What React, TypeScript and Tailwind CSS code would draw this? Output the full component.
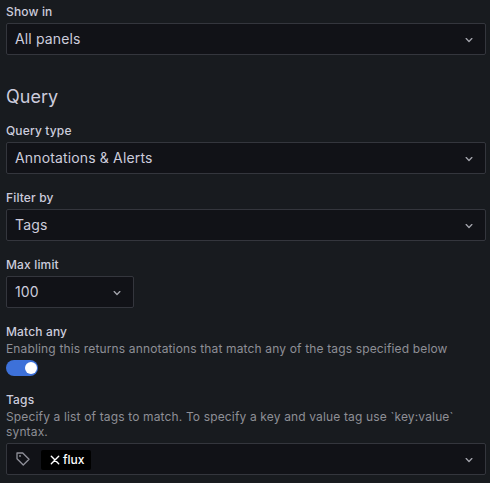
import type { ReactNode } from "react";

function Chevron() {
  return (
    <svg viewBox="0 0 24 24" className="mt-0.5 size-4 shrink-0" fill="#a3a4ac">
      <path d="M17 9.17a1 1 0 0 0-1.41 0L12 12.71 8.46 9.17a1 1 0 0 0-1.41 0 1 1 0 0 0 0 1.42l4.24 4.24a1 1 0 0 0 1.42 0L17 10.59a1 1 0 0 0 0-1.42Z" />
    </svg>
  );
}

function Select({ value, className = "w-[480px]" }: { value: string; className?: string }) {
  return (
    <div className={`flex h-8 items-center justify-between rounded-[2px] border border-[#34363d] bg-[#111217] px-2 text-[14px] tracking-[0.15px] ${className}`}>
      <span className="leading-5">{value}</span>
      <Chevron />
    </div>
  );
}

function Label({ children }: { children: string }) {
  return <div className="text-[12px] font-medium leading-[15px] tracking-[0.15px]">{children}</div>;
}

function Hint({ children }: { children: ReactNode }) {
  return <div className="mt-0.5 text-[12px] leading-[15px] tracking-[0.15px] text-[#8e8f96]">{children}</div>;
}

export default function App() {
  return (
    <div className="h-[483px] w-[490px] overflow-hidden bg-[#181b1f] pl-1.5 pt-1 font-['Inter',sans-serif] text-[#ccccdc]">
      <Label>Show in</Label>
      <div className="mt-1"><Select value="All panels" /></div>
      <h3 className="mt-[31px] text-[18px] leading-[22px]">Query</h3>
      <div className="mt-[15px]"><Label>Query type</Label></div>
      <div className="mt-1"><Select value="Annotations & Alerts" /></div>
      <div className="mt-4"><Label>Filter by</Label></div>
      <div className="mt-1"><Select value="Tags" /></div>
      <div className="mt-4"><Label>Max limit</Label></div>
      <div className="mt-1"><Select value="100" className="w-32" /></div>
      <div className="mt-4"><Label>Match any</Label></div>
      <Hint>Enabling this returns annotations that match any of the tags specified below</Hint>
      <div className="mt-1 flex h-4 w-8 items-center justify-end rounded-full bg-[#3d71d9] pr-[1px]">
        <div className="size-3 rounded-full bg-white" />
      </div>
      <div className="mt-4"><Label>Tags</Label></div>
      <Hint>Specify a list of tags to match. To specify a key and value tag use `key:value`<br />syntax.</Hint>
      <div className="mt-1 flex h-8 w-[480px] items-center rounded-[2px] border border-[#34363d] bg-[#111217] px-2">
        <svg viewBox="0 0 24 24" className="size-4" fill="none" stroke="#8e8f98" strokeWidth="2" strokeLinecap="round" strokeLinejoin="round">
          <path d="M3 3h8.6l9.4 9.4-8.6 8.6L3 11.6Z" /><circle cx="7.5" cy="7.5" r=".5" />
        </svg>
        <div className="ml-[10px] mt-0.5 flex h-5 w-[50px] items-center rounded-[2px] bg-black pl-2 text-[12px] font-medium text-white">
          <svg viewBox="0 0 12 12" className="mr-0.5 size-3" fill="none" stroke="white" strokeWidth="1.4" strokeLinecap="round"><path d="m2.3 2.3 7.4 7.4m0-7.4-7.4 7.4" /></svg>
          flux
        </div>
        <div className="ml-auto"><Chevron /></div>
      </div>
    </div>
  );
}
